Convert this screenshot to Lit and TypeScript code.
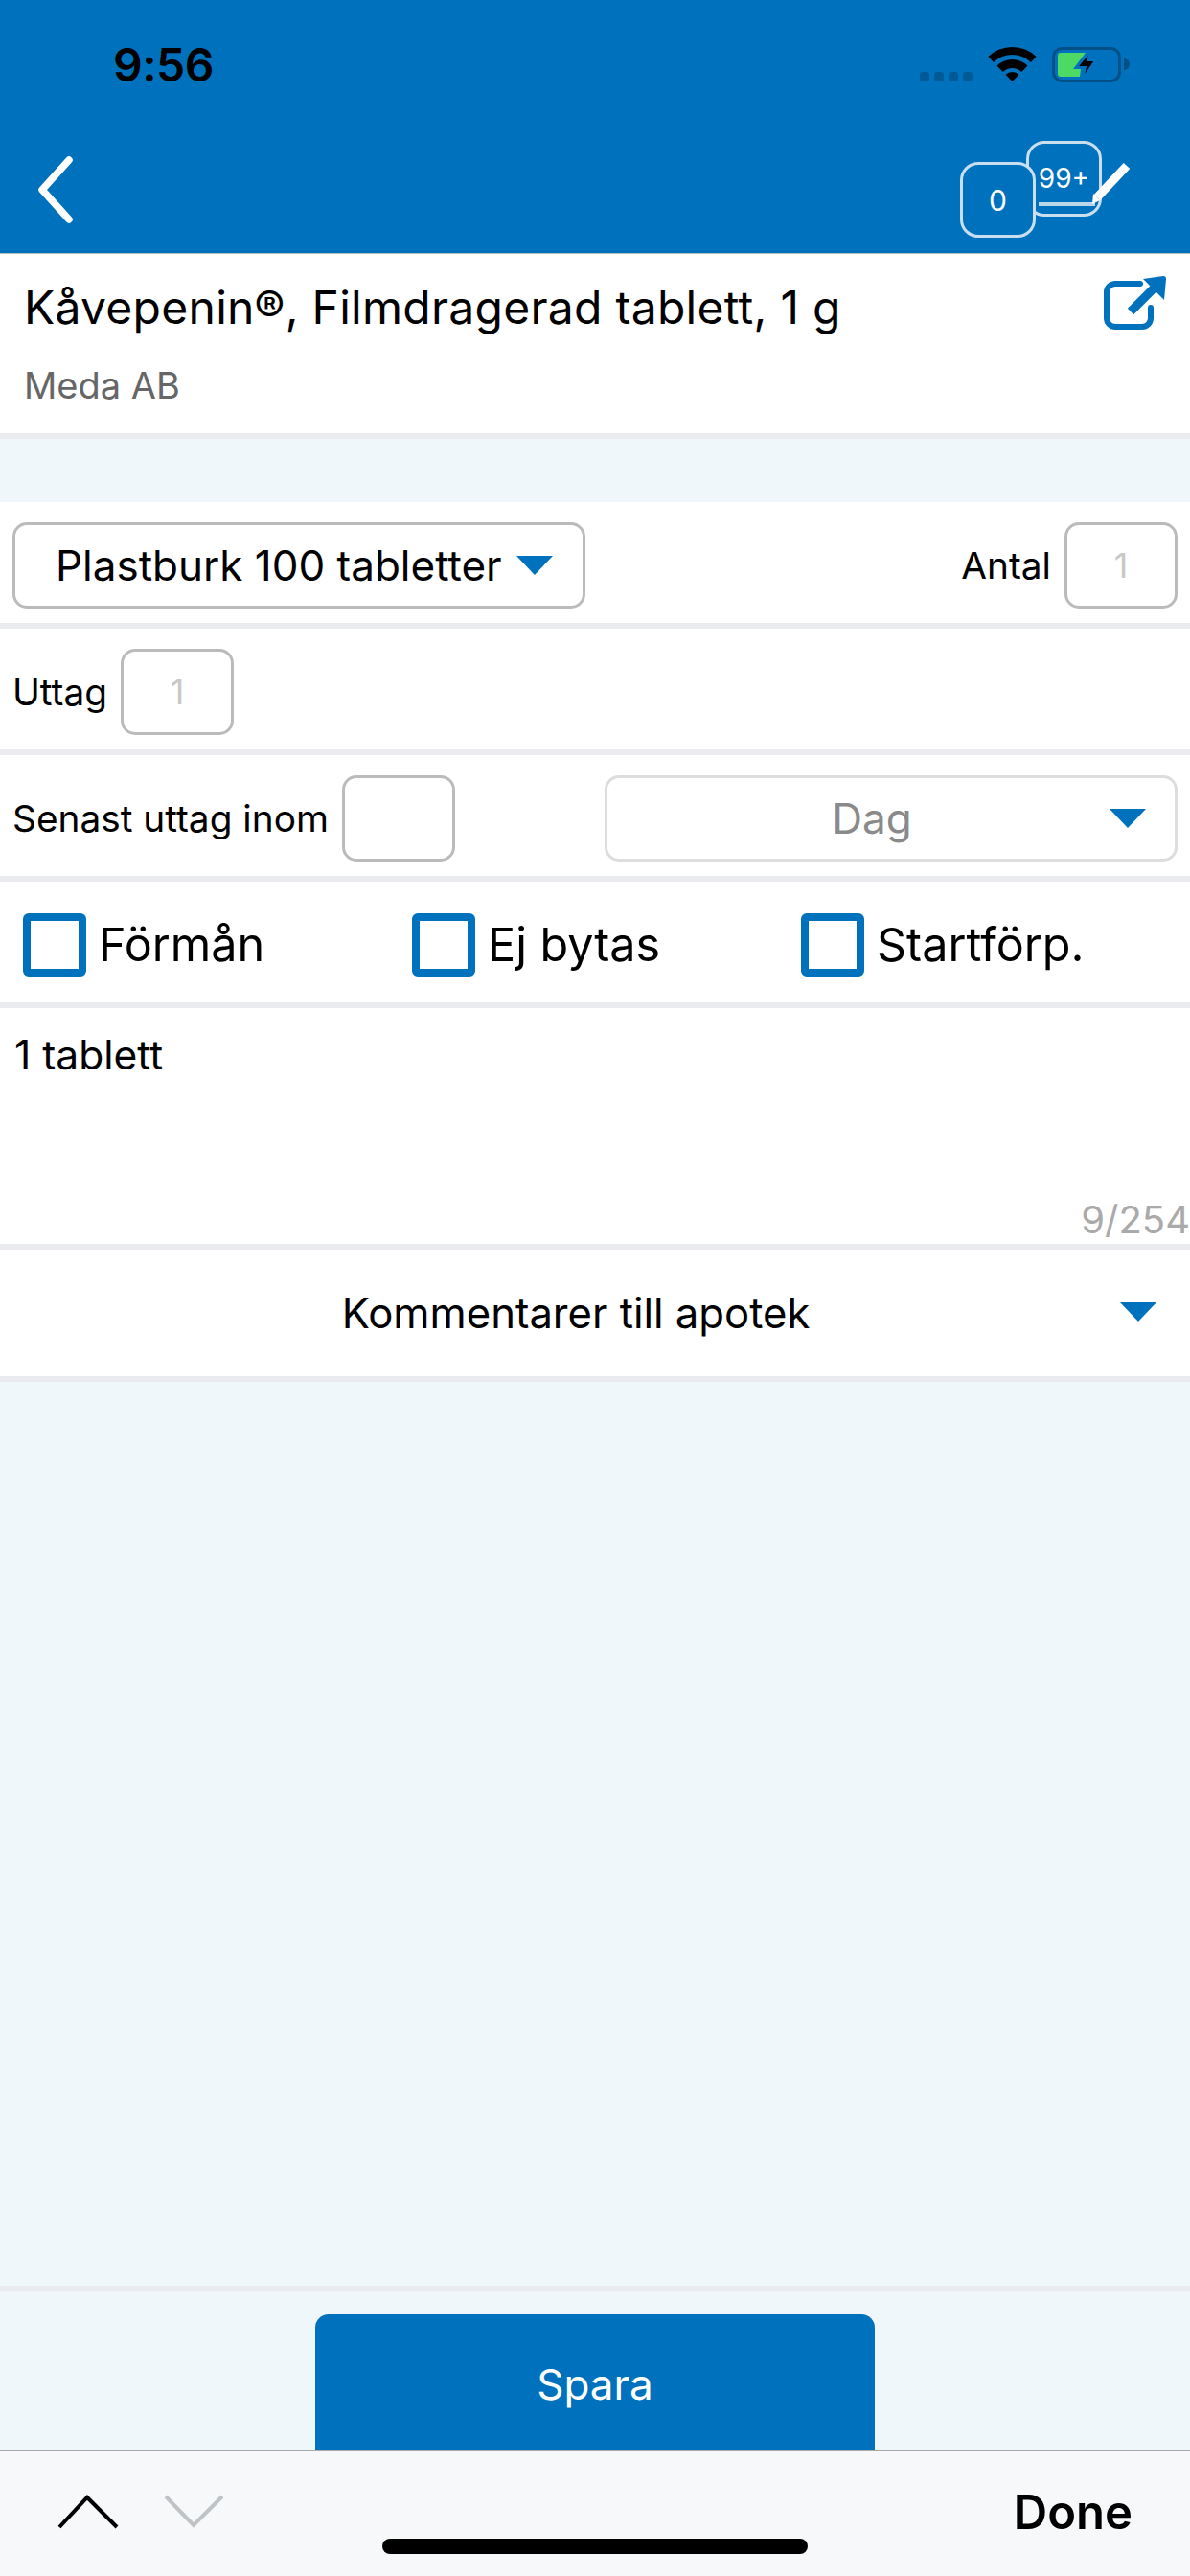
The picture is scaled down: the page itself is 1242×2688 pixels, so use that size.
import { LitElement, html, css, svg } from "lit";
import { customElement } from "lit/decorators.js";

const caret = svg`<svg class="caret" viewBox="0 0 38 20" width="38" height="20"><path d="M0 0H38L19 20Z" fill="#0071bc"/></svg>`;

@customElement("app-root")
export class AppRoot extends LitElement {
  static styles = css`
    :host { display: block; width: 1242px; height: 2688px; font-family: Inter, "Liberation Sans", sans-serif; color: #000; }
    * { box-sizing: border-box; }
    .page { position: relative; width: 1242px; height: 2688px; background: #f0f7fa; display: flex; flex-direction: column; overflow: hidden; }
    .top { background: #0071bc; height: 264px; flex: none; display: flex; flex-direction: column; }
    .status { height: 132px; display: flex; align-items: flex-start; justify-content: space-between; padding: 40px 62px 0 118px; }
    .status svg { margin-top: 9px; }
    .time { font-size: 48px; font-weight: 600; line-height: 56px; letter-spacing: -0.5px; }
    .nav { flex: 1; display: flex; justify-content: space-between; padding: 15px 64px 0 39px; }
    .back { margin-top: 16px; }
    .cluster { position: relative; width: 176px; height: 100px; }
    .badge { position: absolute; width: 79px; height: 79px; border: 3px solid #c9dff0; border-radius: 19px; background: #0071bc; color: #fff; display: flex; justify-content: center; line-height: 36px; }
    .b99 { left: 69px; top: 0; padding-top: 18px; font-size: 28px; }
    .b99::after { content: ""; position: absolute; left: 10px; right: 4px; top: 61px; height: 4px; background: #b9d6ea; }
    .b0 { left: 0; top: 22px; padding-top: 19px; font-size: 30px; }
    .pen { position: absolute; left: 136px; top: 22px; }
    .head { background: #fff; height: 194px; flex: none; border-top: 1px solid #b5bcc2; border-bottom: 6px solid #e9ebef; padding: 0 0 0 25px; display: flex; flex-direction: column; position: relative; }
    .title { font-size: 48px; line-height: 58px; margin-top: 27px; letter-spacing: 0.27px; }
    .maker { font-size: 38px; line-height: 44px; margin-top: 30px; color: #666; }
    .ext { position: absolute; right: 24px; top: 21px; }
    .spacer { height: 66px; flex: none; }
    .row { background: #fff; flex: none; height: 132px; border-bottom: 6px solid #e9ebef; display: flex; align-items: center; padding: 5px 13px 0; }
    .label { font-size: 38.8px; }
    .box { width: 118px; height: 90px; border: 3px solid #bbb; border-radius: 15px; display: flex; align-items: center; justify-content: center; font-size: 36px; color: #c8c8c8; margin-left: 14px; flex: none; }
    .select { height: 90px; border: 3px solid #bbb; border-radius: 15px; display: flex; align-items: center; flex: none; font-size: 44px; }
    .s1 { width: 598px; padding: 0 31px 0 42px; justify-content: space-between; margin-right: auto; }
    .s2 { width: 598px; margin-left: auto; border-color: #ddd; color: #8a8a8a; position: relative; justify-content: center; padding-right: 40px; }
    .s2 .caret { position: absolute; right: 30px; top: 32px; }
    .checks { display: grid; grid-template-columns: repeat(3, 406px); padding: 5px 0 0 24px; }
    .check { display: flex; align-items: center; gap: 13px; font-size: 48.5px; }
    .cb { width: 66px; height: 66px; border: 8px solid #0071bc; border-radius: 6px; flex: none; }
    .note { background: #fff; flex: none; height: 252px; border-bottom: 6px solid #e9ebef; padding: 24px 15px 0; position: relative; font-size: 42.5px; line-height: 50px; }
    .count { position: absolute; right: 0; bottom: 2px; color: #aaa; font-size: 40px; line-height: 46px; }
    .comments { background: #fff; flex: none; height: 138px; border-bottom: 6px solid #e9ebef; display: flex; align-items: center; justify-content: center; font-size: 43.6px; position: relative; padding-right: 40px; }
    .comments .caret { position: absolute; right: 35px; top: 55px; }
    .grow { flex: 1; }
    .foot { flex: none; height: 303px; border-top: 6px solid #e9ebef; display: flex; justify-content: center; padding-top: 24px; }
    .save { width: 584px; height: 160px; background: #0071bc; border-radius: 14px; color: #fff; font-size: 44px; display: flex; align-items: center; justify-content: center; padding-bottom: 14px; margin-left: 0; }
    .kb { position: absolute; left: 0; right: 0; bottom: 0; height: 132px; background: #f6f8fa; border-top: 2px solid #aaa; }
    .arrows { position: absolute; left: 60px; top: 44px; }
    .done { position: absolute; right: 60px; top: 35px; font-size: 49px; font-weight: 600; line-height: 58px; }
    .home { position: absolute; left: 399px; top: 91px; width: 444px; height: 16px; border-radius: 8px; background: #000; }
  `;

  render() {
    return html`<div class="page">
      <div class="top">
        <div class="status">
          <span class="time">9:56</span>
          <svg width="220" height="40" viewBox="0 0 220 40">
            <g fill="#005a96"><rect x="0" y="26" width="10" height="10" rx="3"/><rect x="15" y="26" width="10" height="10" rx="3"/><rect x="30" y="26" width="10" height="10" rx="3"/><rect x="45" y="26" width="10" height="10" rx="3"/></g>
            <path d="M71.500 10.100A36 36 0 0 1 121.500 10.100L116 15.900A28 28 0 0 0 77 15.900ZM80.500 19.500A23 23 0 0 1 112.500 19.500L106.200 26A14 14 0 0 0 86.800 26ZM89.500 28.800A10 10 0 0 1 103.500 28.800L96.500 36Z" fill="#000"/>
            <rect x="139.500" y="1.500" width="69" height="34" rx="9" fill="none" stroke="#004f86" stroke-width="3"/>
            <path d="M213 12a6 6 0 0 1 0 12Z" fill="#004f86"/>
            <path d="M147 6H173L160 23H168L167 31H147a3 3 0 0 1-3-3V9a3 3 0 0 1 3-3Z" fill="#4cd964"/>
            <path d="M178 4L164 21H173L170 33L183 14H175Z" fill="#000" stroke="#0071bc" stroke-width="2"/>
          </svg>
        </div>
        <div class="nav">
          <svg class="back" width="40" height="70" viewBox="0 0 40 70"><path d="M33 4L5 35L33 66" fill="none" stroke="#fff" stroke-width="7.500" stroke-linecap="round" stroke-linejoin="round"/></svg>
          <div class="cluster">
            <div class="badge b99">99+</div>
            <div class="badge b0">0</div>
            <svg class="pen" width="42" height="46" viewBox="0 0 42 46"><path d="M7 37L38 4" stroke="#fff" stroke-width="9" fill="none"/><path d="M2 44L3 33L10 40Z" fill="#fff"/></svg>
          </div>
        </div>
      </div>
      <div class="head">
        <div class="title">Kåvepenin®, Filmdragerad tablett, 1 g</div>
        <div class="maker">Meda AB</div>
        <svg class="ext" width="68" height="60" viewBox="0 0 68 60">
          <path d="M40 10H14a9 9 0 0 0-9 9V46a9 9 0 0 0 9 9H42a9 9 0 0 0 9-9V35" fill="none" stroke="#0071bc" stroke-width="6" stroke-linecap="round"/>
          <path d="M30 39L55 14" stroke="#0071bc" stroke-width="9" fill="none"/>
          <path d="M43 5L64 2Q67 2 67 5L65 27Z" fill="#0071bc"/>
        </svg>
      </div>
      <div class="spacer"></div>
      <div class="row">
        <div class="select s1"><span>Plastburk 100 tabletter</span>${caret}</div>
        <span class="label">Antal</span><div class="box">1</div>
      </div>
      <div class="row"><span class="label">Uttag</span><div class="box">1</div></div>
      <div class="row">
        <span class="label">Senast uttag inom</span><div class="box"></div>
        <div class="select s2"><span>Dag</span>${caret}</div>
      </div>
      <div class="row checks">
        <div class="check"><span class="cb"></span>Förmån</div>
        <div class="check"><span class="cb"></span>Ej bytas</div>
        <div class="check"><span class="cb"></span>Startförp.</div>
      </div>
      <div class="note">1 tablett<span class="count">9/254</span></div>
      <div class="comments"><span>Kommentarer till apotek</span>${caret}</div>
      <div class="grow"></div>
      <div class="foot"><div class="save">Spara</div></div>
      <div class="kb">
        <svg class="arrows" width="176" height="40" viewBox="0 0 176 40">
          <path d="M2 35L31 4L62 35" fill="none" stroke="#000" stroke-width="4"/>
          <path d="M113 3L142 33L172 3" fill="none" stroke="#c0c3c6" stroke-width="4"/>
        </svg>
        <div class="done">Done</div>
        <div class="home"></div>
      </div>
    </div>`;
  }
}
